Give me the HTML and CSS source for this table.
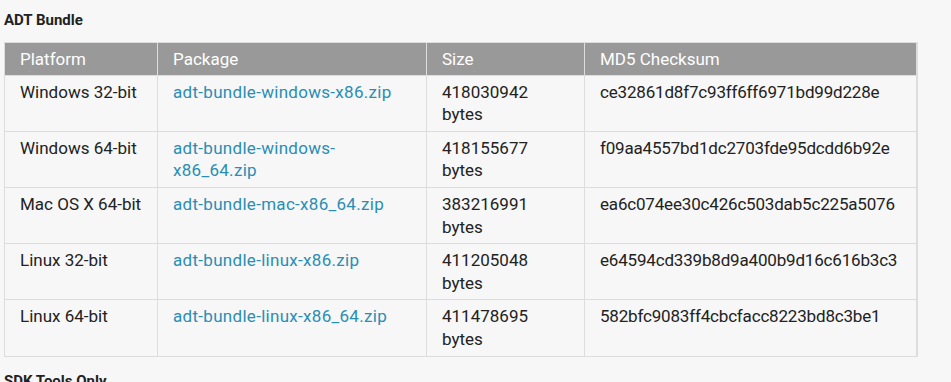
FILE: index.html
```html
<!DOCTYPE html>
<html>
<head>
<meta charset="utf-8">
<link rel="stylesheet" href="styles.css">
</head>
<body>
<div class="page">
  <h4 class="section-title">ADT Bundle</h4>
  <table class="downloads">
    <colgroup>
      <col class="c-platform">
      <col class="c-package">
      <col class="c-size">
      <col class="c-md5">
    </colgroup>
    <thead>
      <tr><th>Platform</th><th>Package</th><th>Size</th><th>MD5 Checksum</th></tr>
    </thead>
    <tbody>
      <tr><td>Windows 32-bit</td><td><a href="#">adt-bundle-windows-x86.zip</a></td><td>418030942 bytes</td><td class="md5">ce32861d8f7c93ff6ff6971bd99d228e</td></tr>
      <tr><td>Windows 64-bit</td><td><a href="#">adt-bundle-windows-x86_64.zip</a></td><td>418155677 bytes</td><td class="md5">f09aa4557bd1dc2703fde95dcdd6b92e</td></tr>
      <tr><td>Mac OS X 64-bit</td><td><a href="#">adt-bundle-mac-x86_64.zip</a></td><td>383216991 bytes</td><td class="md5">ea6c074ee30c426c503dab5c225a5076</td></tr>
      <tr><td>Linux 32-bit</td><td><a href="#">adt-bundle-linux-x86.zip</a></td><td>411205048 bytes</td><td class="md5">e64594cd339b8d9a400b9d16c616b3c3</td></tr>
      <tr><td>Linux 64-bit</td><td><a href="#">adt-bundle-linux-x86_64.zip</a></td><td>411478695 bytes</td><td class="md5">582bfc9083ff4cbcfacc8223bd8c3be1</td></tr>
    </tbody>
  </table>
  <h4 class="section-title next">SDK Tools Only</h4>
</div>
</body>
</html>
```
FILE: styles.css
```css
html, body {
  margin: 0;
  padding: 0;
  background: #f7f7f7;
}
body {
  font-family: Roboto, "Liberation Sans", sans-serif;
  color: #222;
}
.page {
  padding: 10px 4px 0 4px;
}
.section-title {
  margin: 0 0 11px 0;
  font-size: 15px;
  line-height: 21px;
  font-weight: bold;
  color: #222;
}
.section-title.next {
  margin-top: 14px;
}
.downloads {
  border-collapse: collapse;
  table-layout: fixed;
  width: 912px;
  border: 1px solid #ddd;
  border-right-width: 2px;
  font-size: 17px;
  line-height: 22.6px;
}
.c-platform { width: 153px; }
.c-package { width: 269px; }
.c-size { width: 158px; }
.c-md5 { width: 332px; }
.downloads th {
  background: #999;
  color: #fff;
  font-weight: normal;
  text-align: left;
  padding: 5px 15px 4px 15px;
  border: 1px solid #ddd;
}
.downloads td {
  padding: 5px 15px;
  border: 1px solid #ddd;
  vertical-align: top;
}
.downloads td.md5 {
  letter-spacing: -0.18px;
}
.downloads a {
  color: #2a8db4;
  text-decoration: none;
  letter-spacing: 0.3px;
}
```
